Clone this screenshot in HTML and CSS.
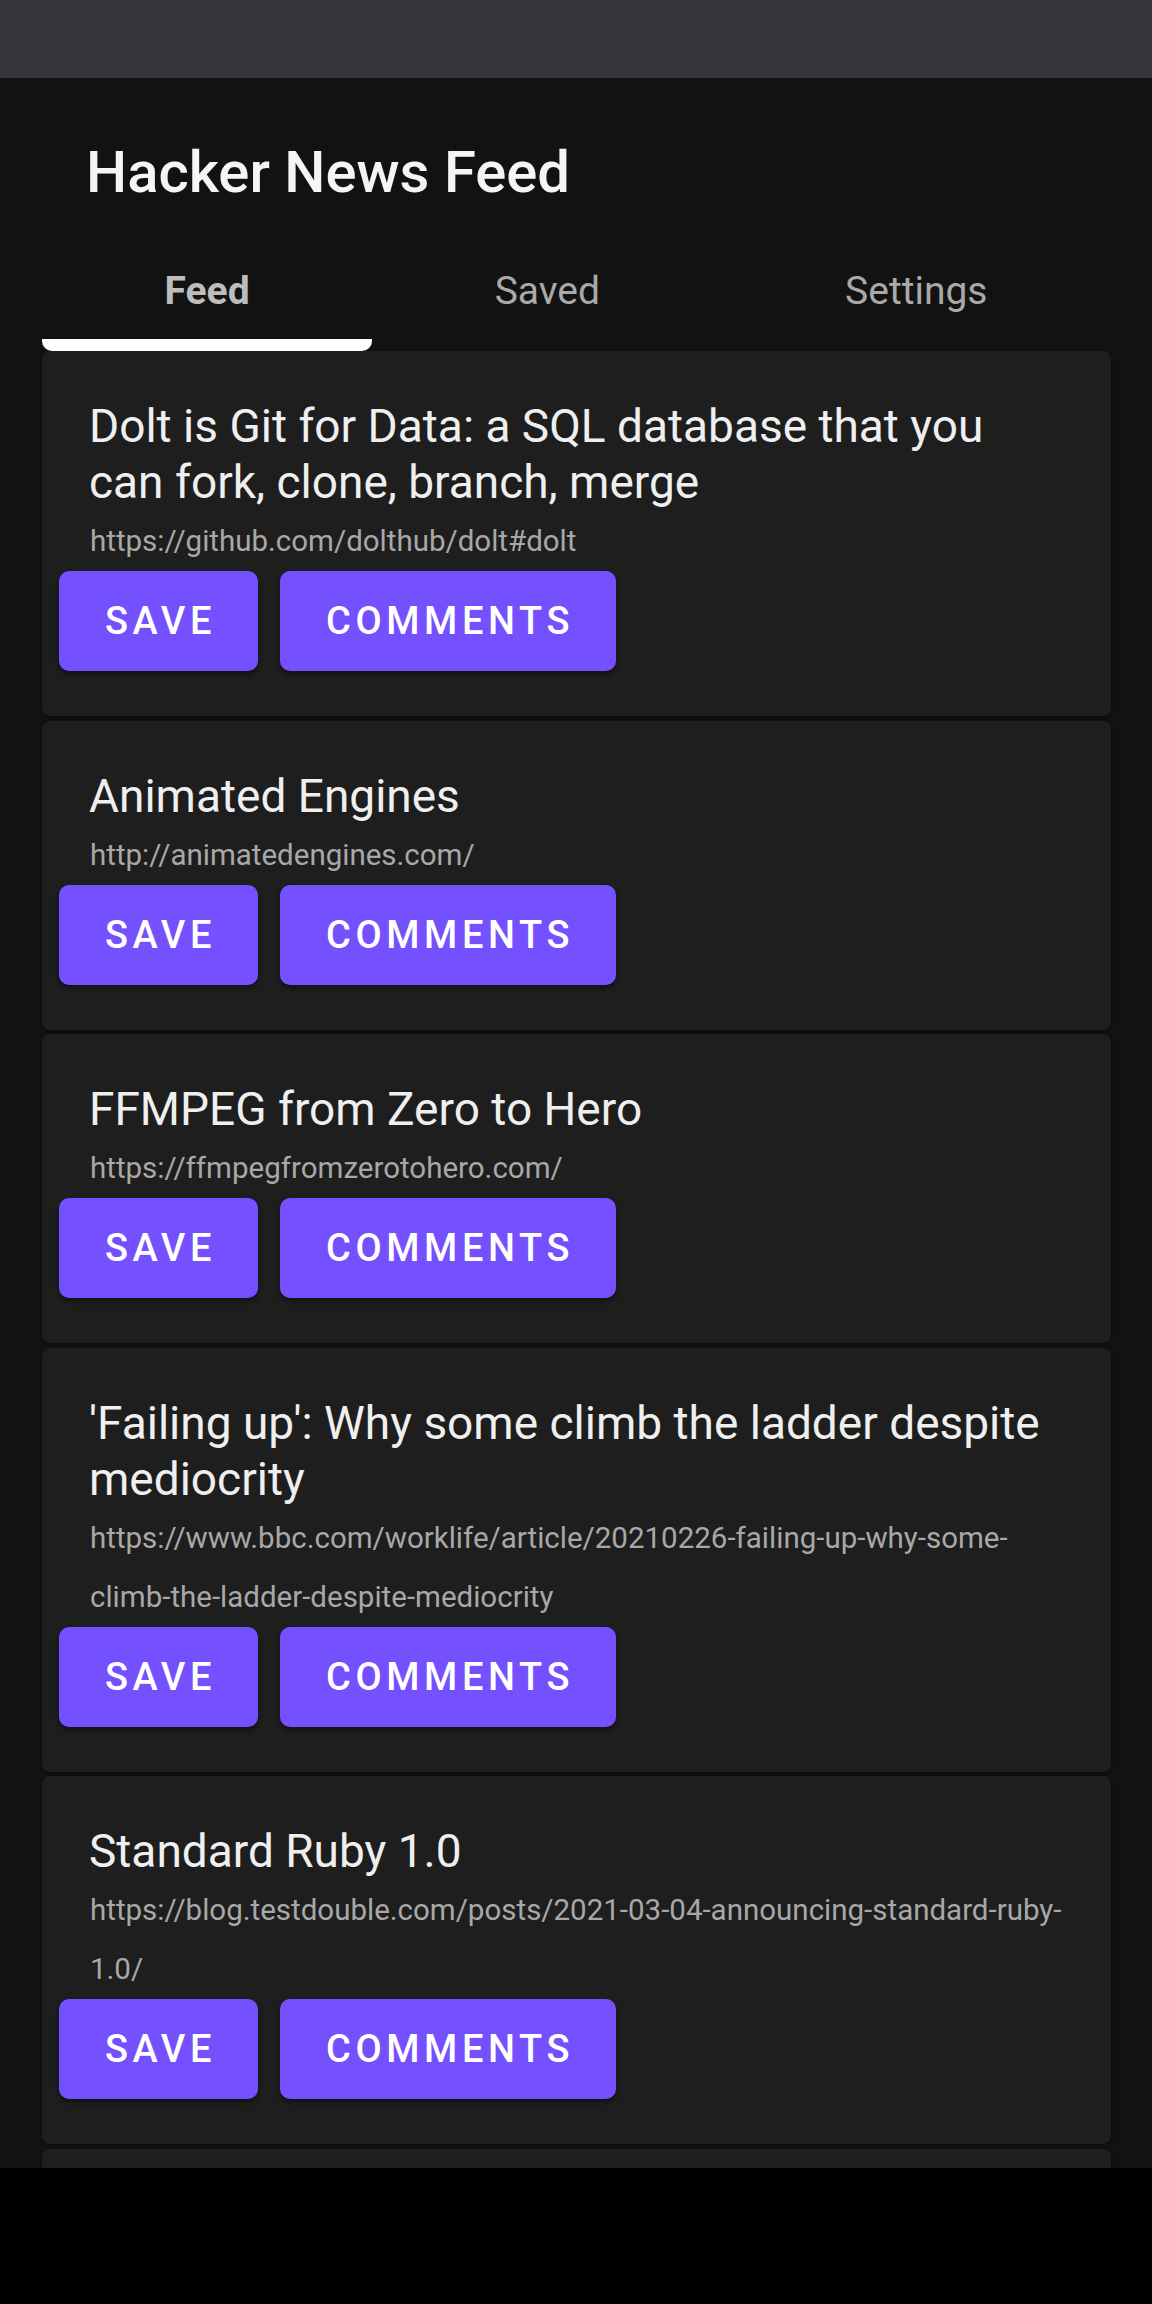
FILE: index.html
```html
<!DOCTYPE html>
<html lang="en">
<head>
<meta charset="utf-8">
<title>Hacker News Feed</title>
<link rel="stylesheet" href="styles.css">
</head>
<body>
<div class="screen">
  <div class="statusbar"></div>
  <main class="app">
    <header class="header">
      <h1 class="app-title">Hacker News Feed</h1>
    </header>
    <nav class="tabs">
      <div class="tab active"><span class="tab-label">Feed</span><div class="indicator"></div></div>
      <div class="tab"><span class="tab-label">Saved</span><div class="indicator"></div></div>
      <div class="tab"><span class="tab-label">Settings</span><div class="indicator"></div></div>
    </nav>
    <section class="feed">
      <article class="card">
        <h2 class="card-title">Dolt is Git for Data: a SQL database that you can fork, clone, branch, merge</h2>
        <p class="card-url">https://github.com/dolthub/dolt#dolt</p>
        <div class="actions"><button class="btn">Save</button><button class="btn">Comments</button></div>
      </article>
      <article class="card">
        <h2 class="card-title">Animated Engines</h2>
        <p class="card-url">http://animatedengines.com/</p>
        <div class="actions"><button class="btn">Save</button><button class="btn">Comments</button></div>
      </article>
      <article class="card">
        <h2 class="card-title">FFMPEG from Zero to Hero</h2>
        <p class="card-url">https://ffmpegfromzerotohero.com/</p>
        <div class="actions"><button class="btn">Save</button><button class="btn">Comments</button></div>
      </article>
      <article class="card">
        <h2 class="card-title">'Failing up': Why some climb the ladder despite mediocrity</h2>
        <p class="card-url">https://www.bbc.com/worklife/article/20210226-failing-up-why-some-<br>climb-the-ladder-despite-mediocrity</p>
        <div class="actions"><button class="btn">Save</button><button class="btn">Comments</button></div>
      </article>
      <article class="card">
        <h2 class="card-title">Standard Ruby 1.0</h2>
        <p class="card-url">https://blog.testdouble.com/posts/2021-03-04-announcing-standard-ruby-<br>1.0/</p>
        <div class="actions"><button class="btn">Save</button><button class="btn">Comments</button></div>
      </article>
      <article class="card stub"></article>
    </section>
  </main>
</div>
</body>
</html>
```
FILE: styles.css
```css
* { box-sizing: border-box; }
html, body {
  margin: 0;
  padding: 0;
  background: #000;
  font-family: Roboto, "Noto Sans", "Liberation Sans", sans-serif;
}
.screen {
  width: 1152px;
  height: 2304px;
  background: #000;
}
.statusbar {
  height: 78px;
  background: #36373b;
}
.app {
  height: 2090px;
  background: #121212;
  overflow: hidden;
}
.header {
  padding: 60px 0 0 86px;
}
.app-title {
  margin: 0;
  font-size: 58px;
  line-height: 68px;
  font-weight: 500;
  color: #f5f5f5;
}
.tabs {
  display: flex;
  margin: 63px 42px 0 42px;
}
.tab {
  flex: 1 1 auto;
  display: flex;
  flex-direction: column;
  align-items: stretch;
  text-align: center;
}
.tab-label {
  font-size: 39px;
  line-height: 45px;
  color: #a9a9a9;
  padding-bottom: 25px;
}
.tab.active .tab-label {
  font-weight: 700;
  color: #bdbdbd;
}
.indicator {
  height: 12px;
  border-radius: 0 0 10px 10px;
}
.tab.active .indicator {
  background: #fff;
}
.feed {
  padding: 0 41px 0 42px;
}
.card {
  background: #1e1e1e;
  border-radius: 8px;
  margin-bottom: 4.5px;
  padding: 47px 0 45px 0;
  box-shadow: 0 1px 3px rgba(0,0,0,0.5);
}
.card.stub {
  height: 120px;
}
.card-title {
  margin: 0 0 2px 0;
  padding: 0 56px 0 47px;
  font-size: 46px;
  line-height: 56px;
  font-weight: 400;
  color: #efefef;
}
.card-url {
  margin: 0;
  padding: 0 20px 0 48px;
  font-size: 29.5px;
  line-height: 59px;
  color: #a8a8a8;
}
.actions {
  display: flex;
  gap: 22px;
  padding-left: 17px;
}
.btn {
  height: 100px;
  padding: 0 42px 0 46px;
  border: none;
  border-radius: 10px;
  background: #7450fe;
  color: #fff;
  font-family: Roboto, "Noto Sans", "Liberation Sans", sans-serif;
  font-size: 38px;
  font-weight: 500;
  letter-spacing: 4.6px;
  text-transform: uppercase;
  box-shadow: 0 3px 5px rgba(0,0,0,0.45);
}
```
